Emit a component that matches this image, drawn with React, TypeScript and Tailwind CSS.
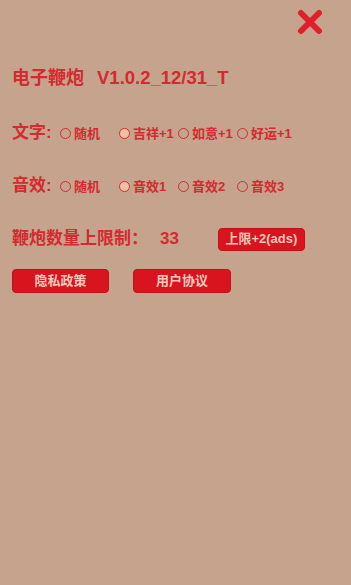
import { useState } from "react";

const FONT = { fontFamily: '"Liberation Sans", "Noto Sans CJK SC", sans-serif' };

function Radio({ label, checked, onClick }: { label: string; checked: boolean; onClick: () => void }) {
  return (
    <button onClick={onClick} className="w-[59px] flex items-center gap-[3px] text-[13px] font-bold text-[#d42a30] leading-none">
      <span className={`w-[11px] h-[11px] rounded-full border-[1.5px] border-[#d42a30] shrink-0 ${checked ? "bg-[#f4c0a8]" : ""}`} />
      <span className="whitespace-nowrap">{label}</span>
    </button>
  );
}

function OptionRow({ title, options, picked, onPick }: { title: string; options: string[]; picked: number; onPick: (i: number) => void }) {
  return (
    <div className="flex items-center h-[24px]">
      <div className="w-[48px] text-[17px] font-bold text-[#d42a30] whitespace-nowrap">{title}</div>
      {options.map((o, i) => (
        <Radio key={o} label={o} checked={picked === i} onClick={() => onPick(i)} />
      ))}
    </div>
  );
}

export default function App() {
  const [text, setText] = useState(1);
  const [sound, setSound] = useState(1);
  const [limit, setLimit] = useState(33);

  return (
    <div className="w-[351px] h-[585px] bg-[#c5a38d] px-[12px] overflow-hidden" style={FONT}>
      {/* Close */}
      <div className="flex justify-end pt-[9px] pr-[16px]">
        <svg width="26" height="26" viewBox="0 0 26 26">
          <path d="M4 4 L22 22 M22 4 L4 22" stroke="#e01f2a" strokeWidth="6" strokeLinecap="round" />
        </svg>
      </div>

      <div className="mt-[31px] h-[24px] flex items-center text-[18px] font-bold text-[#d42a30] whitespace-nowrap">
        <span>电子鞭炮</span>
        <span className="ml-[13px] text-[18.5px]">V1.0.2_12/31_T</span>
      </div>

      <div className="mt-[31px]">
        <OptionRow title="文字:" options={["随机", "吉祥+1", "如意+1", "好运+1"]} picked={text} onPick={setText} />
      </div>
      <div className="mt-[29px]">
        <OptionRow title="音效:" options={["随机", "音效1", "音效2", "音效3"]} picked={sound} onPick={setSound} />
      </div>

      <div className="mt-[29px] h-[24px] flex items-center">
        <span className="text-[17px] font-bold text-[#d42a30] whitespace-nowrap">鞭炮数量上限制：</span>
        <span className="ml-[12px] text-[17px] font-bold text-[#d42a30]">{limit}</span>
        <button
          onClick={() => setLimit(limit + 2)}
          className="ml-[39px] w-[87px] h-[23px] rounded-[4px] bg-[#d8141f] border border-[#c01018] text-[13px] font-bold text-[#f6c9bb]"
        >
          上限+2(ads)
        </button>
      </div>

      <div className="mt-[18px] flex gap-[24px]">
        <button className="w-[97px] h-[24px] rounded-[4px] bg-[#d8141f] border border-[#c01018] text-[13px] font-bold text-[#f6c9bb]">隐私政策</button>
        <button className="w-[98px] h-[24px] rounded-[4px] bg-[#d8141f] border border-[#c01018] text-[13px] font-bold text-[#f6c9bb]">用户协议</button>
      </div>
    </div>
  );
}
